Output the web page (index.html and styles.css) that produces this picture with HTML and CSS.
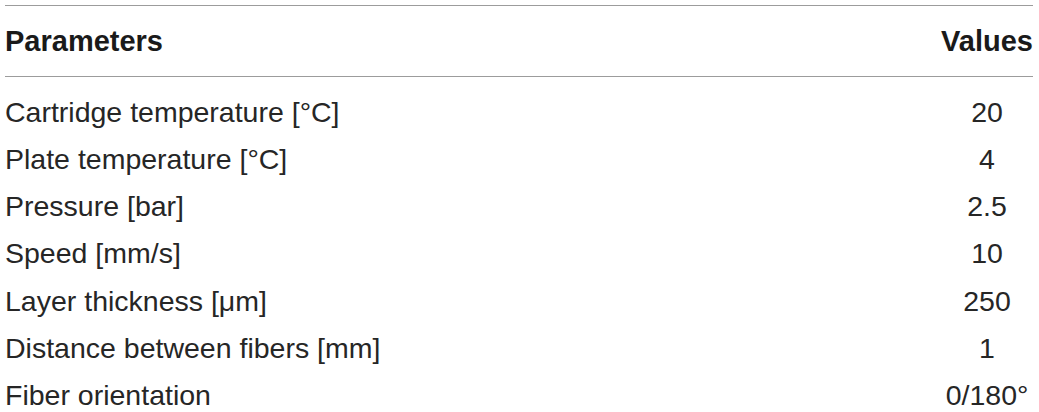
FILE: index.html
```html
<!DOCTYPE html>
<html>
<head>
<meta charset="utf-8">
<link rel="stylesheet" href="styles.css">
</head>
<body>
<table class="params">
  <thead>
    <tr><th class="name">Parameters</th><th class="val">Values</th></tr>
  </thead>
  <tbody>
    <tr><td class="name">Cartridge temperature [°C]</td><td class="val">20</td></tr>
    <tr><td class="name">Plate temperature [°C]</td><td class="val">4</td></tr>
    <tr><td class="name">Pressure [bar]</td><td class="val">2.5</td></tr>
    <tr><td class="name">Speed [mm/s]</td><td class="val">10</td></tr>
    <tr><td class="name">Layer thickness [μm]</td><td class="val">250</td></tr>
    <tr><td class="name">Distance between fibers [mm]</td><td class="val">1</td></tr>
    <tr><td class="name">Fiber orientation</td><td class="val">0/180°</td></tr>
  </tbody>
</table>
</body>
</html>
```

FILE: styles.css
```css
html, body {
  margin: 0;
  padding: 0;
  background: #ffffff;
}
body {
  padding: 5px 6px 0 5px;
  font-family: "Liberation Sans", Arial, sans-serif;
  color: #262626;
}
.params {
  width: 1028px;
  border-collapse: collapse;
  border-top: 1px solid #9c9c9c;
}
.params th,
.params td {
  padding: 0;
  white-space: nowrap;
}
.params th {
  font-size: 29px;
  font-weight: bold;
  color: #1a1a1a;
  line-height: 47px;
  padding-top: 12px;
  padding-bottom: 11px;
  border-bottom: 1px solid #9c9c9c;
}
.params td {
  font-size: 28.5px;
  line-height: 47.3px;
  font-weight: normal;
}
.params tbody tr:first-child td {
  padding-top: 11.5px;
}
.params .name {
  text-align: left;
}
.params .val {
  width: 1px;
  text-align: center;
}
```
